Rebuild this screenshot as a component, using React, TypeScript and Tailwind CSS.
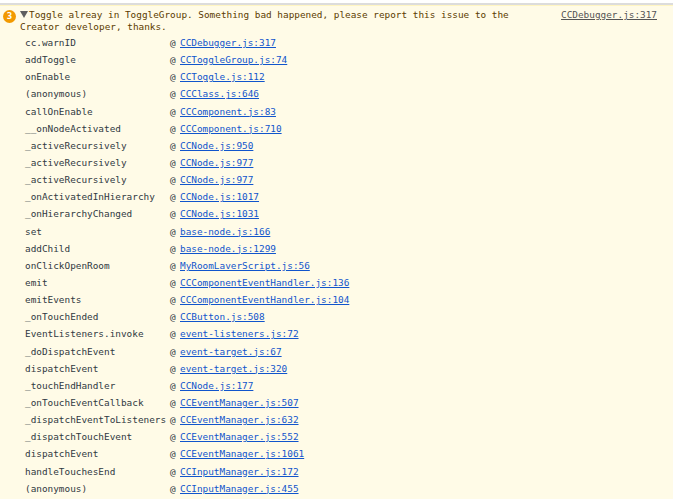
const rows: [string, string][] = [
  ["cc.warnID", "CCDebugger.js:317"],
  ["addToggle", "CCToggleGroup.js:74"],
  ["onEnable", "CCToggle.js:112"],
  ["(anonymous)", "CCClass.js:646"],
  ["callOnEnable", "CCComponent.js:83"],
  ["__onNodeActivated", "CCComponent.js:710"],
  ["_activeRecursively", "CCNode.js:950"],
  ["_activeRecursively", "CCNode.js:977"],
  ["_activeRecursively", "CCNode.js:977"],
  ["_onActivatedInHierarchy", "CCNode.js:1017"],
  ["_onHierarchyChanged", "CCNode.js:1031"],
  ["set", "base-node.js:166"],
  ["addChild", "base-node.js:1299"],
  ["onClickOpenRoom", "MyRoomLaverScript.js:56"],
  ["emit", "CCComponentEventHandler.js:136"],
  ["emitEvents", "CCComponentEventHandler.js:104"],
  ["_onTouchEnded", "CCButton.js:508"],
  ["EventListeners.invoke", "event-listeners.js:72"],
  ["_doDispatchEvent", "event-target.js:67"],
  ["dispatchEvent", "event-target.js:320"],
  ["_touchEndHandler", "CCNode.js:177"],
  ["_onTouchEventCallback", "CCEventManager.js:507"],
  ["_dispatchEventToListeners", "CCEventManager.js:632"],
  ["_dispatchTouchEvent", "CCEventManager.js:552"],
  ["dispatchEvent", "CCEventManager.js:1061"],
  ["handleTouchesEnd", "CCInputManager.js:172"],
  ["(anonymous)", "CCInputManager.js:455"],
];

export default function App() {
  return (
    <div className="h-[499px] w-[673px] overflow-hidden bg-[#fffbe7] font-['DejaVu_Sans_Mono','Liberation_Mono',monospace] text-[9.4px]">
      <div className="h-[5px] border-b-2 border-[#dcdcdc] bg-white" />
      <div className="flex border-t border-[#fff5c2] pl-[3px] pr-[16px] pt-[3px]">
        <div className="mt-[1px] flex h-[13px] w-[13px] shrink-0 items-center justify-center rounded-full bg-[#f29900] text-[9px] font-bold text-white">
          3
        </div>
        <div className="ml-[4px] w-[490px] leading-[12px] text-[#5c3b00]">
          <span className="mr-[1px] inline-block h-0 w-0 border-x-[4px] border-t-[7px] border-x-transparent border-t-[#5f5f5f] align-[0px]" />
          Toggle alreay in ToggleGroup. Something bad happened, please report this issue to the Creator developer, thanks.
        </div>
        <a className="ml-auto leading-[12px] text-[#545454] underline">CCDebugger.js:317</a>
      </div>
      <div className="mt-[1.5px] flex flex-col pl-[25px]">
        {rows.map(([name, link], i) => (
          <div key={i} className="flex h-[17.15px] items-center">
            <span className="w-[145px] shrink-0 whitespace-pre text-[#303942]">{name}</span>
            <span className="w-[10px] shrink-0 text-[#303942]">@</span>
            <a className="text-[#1155cc] underline">{link}</a>
          </div>
        ))}
      </div>
    </div>
  );
}
